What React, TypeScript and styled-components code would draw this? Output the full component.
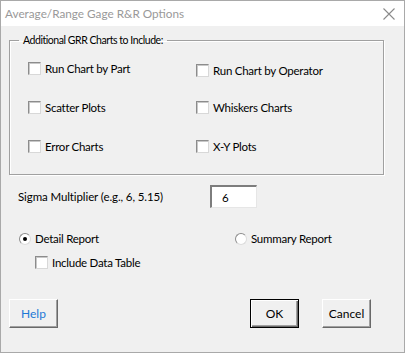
import React from "react";
import styled, { createGlobalStyle } from "styled-components";

const GlobalStyle = createGlobalStyle`
	html, body {
		margin: 0;
		padding: 0;
		background: #ffffff;
	}
	* {
		box-sizing: border-box;
	}
`;

const leftCharts = ["Run Chart by Part", "Scatter Plots", "Error Charts"];
const rightCharts = ["Run Chart by Operator", "Whiskers Charts", "X-Y Plots"];

function App() {
	return (
		<>
			<GlobalStyle />
			<Window>
				<TitleBar>
					<Title>Average/Range Gage R&amp;R Options</Title>
					<CloseButton>
						<svg width="12" height="12" viewBox="0 0 12 12">
							<path d="M0.5 0.5 L11.5 11.5 M11.5 0.5 L0.5 11.5" stroke="#8a8a8a" strokeWidth="1.1" fill="none" />
						</svg>
					</CloseButton>
				</TitleBar>
				<Body>
					<GroupBox>
						<Legend>Additional GRR Charts to Include:</Legend>
						<ChartGrid>
							{leftCharts.map((label, i) => (
								<React.Fragment key={label}>
									<CheckRow>
										<CheckBox />
										<Label>{label}</Label>
									</CheckRow>
									<CheckRow $nudge={i === 0 ? 2 : 0}>
										<CheckBox />
										<Label>{rightCharts[i]}</Label>
									</CheckRow>
								</React.Fragment>
							))}
						</ChartGrid>
					</GroupBox>

					<SigmaRow>
						<SigmaLabel>Sigma Multiplier (e.g., 6, 5.15)</SigmaLabel>
						<TextField>6</TextField>
					</SigmaRow>

					<RadioRow>
						<RadioOption $width={216}>
							<Radio $checked />
							<Label>Detail Report</Label>
						</RadioOption>
						<RadioOption>
							<Radio />
							<Label>Summary Report</Label>
						</RadioOption>
					</RadioRow>

					<IncludeRow>
						<CheckBox />
						<Label>Include Data Table</Label>
					</IncludeRow>

					<ButtonRow>
						<Button $link>Help</Button>
						<Spacer />
						<Button $default>OK</Button>
						<Button>Cancel</Button>
					</ButtonRow>
				</Body>
			</Window>
		</>
	);
}

export default App;

const Window = styled.div`
	width: 405px;
	height: 353px;
	display: flex;
	flex-direction: column;
	border: 1px solid #a9a9a9;
	background: #f0f0f0;
	font-family: "Lato", "Noto Sans", sans-serif;
	font-size: 11.5px;
	color: #000000;
	overflow: hidden;
`;

const TitleBar = styled.div`
	height: 25px;
	flex: none;
	display: flex;
	align-items: center;
	justify-content: space-between;
	background: #ffffff;
	padding: 0 9px 1px 4px;
`;

const Title = styled.div`
	font-size: 11.75px;
	color: #999999;
	white-space: nowrap;
`;

const CloseButton = styled.div`
	display: flex;
	align-items: center;
	margin-top: 1px;
`;

const Body = styled.div`
	flex: 1;
	display: flex;
	flex-direction: column;
	padding: 7px 33px 0 8px;
`;

const GroupBox = styled.fieldset`
	margin: 0;
	padding: 0 0 21px 0;
	width: 375px;
	border: 1px solid #a0a0a0;
	box-shadow: inset 1px 1px 0 #ffffff, 1px 1px 0 #ffffff;
`;

const Legend = styled.legend`
	margin-left: 9px;
	padding: 0 4px;
	font-size: 10.5px;
	letter-spacing: -0.45px;
	line-height: 14px;
`;

const ChartGrid = styled.div`
	display: grid;
	grid-template-columns: 168px 1fr;
	row-gap: 26px;
	padding: 15px 0 0 18px;
`;

const CheckRow = styled.div<{ $nudge?: number }>`
	display: flex;
	align-items: center;
	gap: 4px;
	height: 13px;
	transform: translateY(${(p) => p.$nudge ?? 0}px);
`;

const CheckBox = styled.span`
	flex: none;
	width: 13px;
	height: 13px;
	background: #ffffff;
	border: 1px solid #8c8c8c;
	border-right-color: #d8d8d8;
	border-bottom-color: #d8d8d8;
	box-shadow: inset 1px 1px 0 #c8c8c8;
`;

const Label = styled.span`
	white-space: nowrap;
	line-height: 13px;
	letter-spacing: -0.25px;
`;

const SigmaRow = styled.div`
	display: flex;
	align-items: center;
	margin-top: 10px;
	padding-left: 9px;
`;

const SigmaLabel = styled.span`
	width: 192px;
	white-space: nowrap;
	letter-spacing: -0.1px;
`;

const TextField = styled.div`
	width: 47px;
	height: 23px;
	display: flex;
	align-items: center;
	padding-left: 10px;
	background: #ffffff;
	border-top: 2px solid #7d7d7d;
	border-left: 2px solid #7d7d7d;
	border-right: 1px solid #e6e6e6;
	border-bottom: 1px solid #e6e6e6;
`;

const RadioRow = styled.div`
	display: flex;
	align-items: center;
	margin-top: 24px;
	padding-left: 10px;
`;

const RadioOption = styled.div<{ $width?: number }>`
	display: flex;
	align-items: center;
	gap: 4px;
	width: ${(p) => (p.$width ? `${p.$width}px` : "auto")};
`;

const Radio = styled.span<{ $checked?: boolean }>`
	flex: none;
	width: 12px;
	height: 12px;
	border-radius: 50%;
	background: #ffffff;
	border: 1px solid #8c8c8c;
	border-right-color: #dcdcdc;
	border-bottom-color: #dcdcdc;
	display: flex;
	align-items: center;
	justify-content: center;

	&::after {
		content: "";
		display: ${(p) => (p.$checked ? "block" : "none")};
		width: 4px;
		height: 4px;
		border-radius: 50%;
		background: #000000;
	}
`;

const IncludeRow = styled.div`
	display: flex;
	align-items: center;
	gap: 4px;
	margin-top: 11px;
	padding-left: 26px;
`;

const ButtonRow = styled.div`
	display: flex;
	align-items: center;
	gap: 23px;
	margin-top: 30px;
`;

const Spacer = styled.div`
	flex: 1;
`;

const Button = styled.div<{ $default?: boolean; $link?: boolean }>`
	width: 49px;
	height: 29px;
	display: flex;
	align-items: center;
	justify-content: center;
	background: #f0f0f0;
	font-size: 12px;
	color: ${(p) => (p.$link ? "#1e78d6" : "#000000")};
	border: 1px solid ${(p) => (p.$default ? "#000000" : "#ffffff")};
	border-right-color: ${(p) => (p.$default ? "#000000" : "#696969")};
	border-bottom-color: ${(p) => (p.$default ? "#000000" : "#696969")};
	box-shadow: ${(p) =>
		p.$default
			? "inset 1px 1px 0 #ffffff, inset -1px -1px 0 #696969, inset -2px -2px 0 #a0a0a0"
			: "inset -1px -1px 0 #a0a0a0"};
`;
